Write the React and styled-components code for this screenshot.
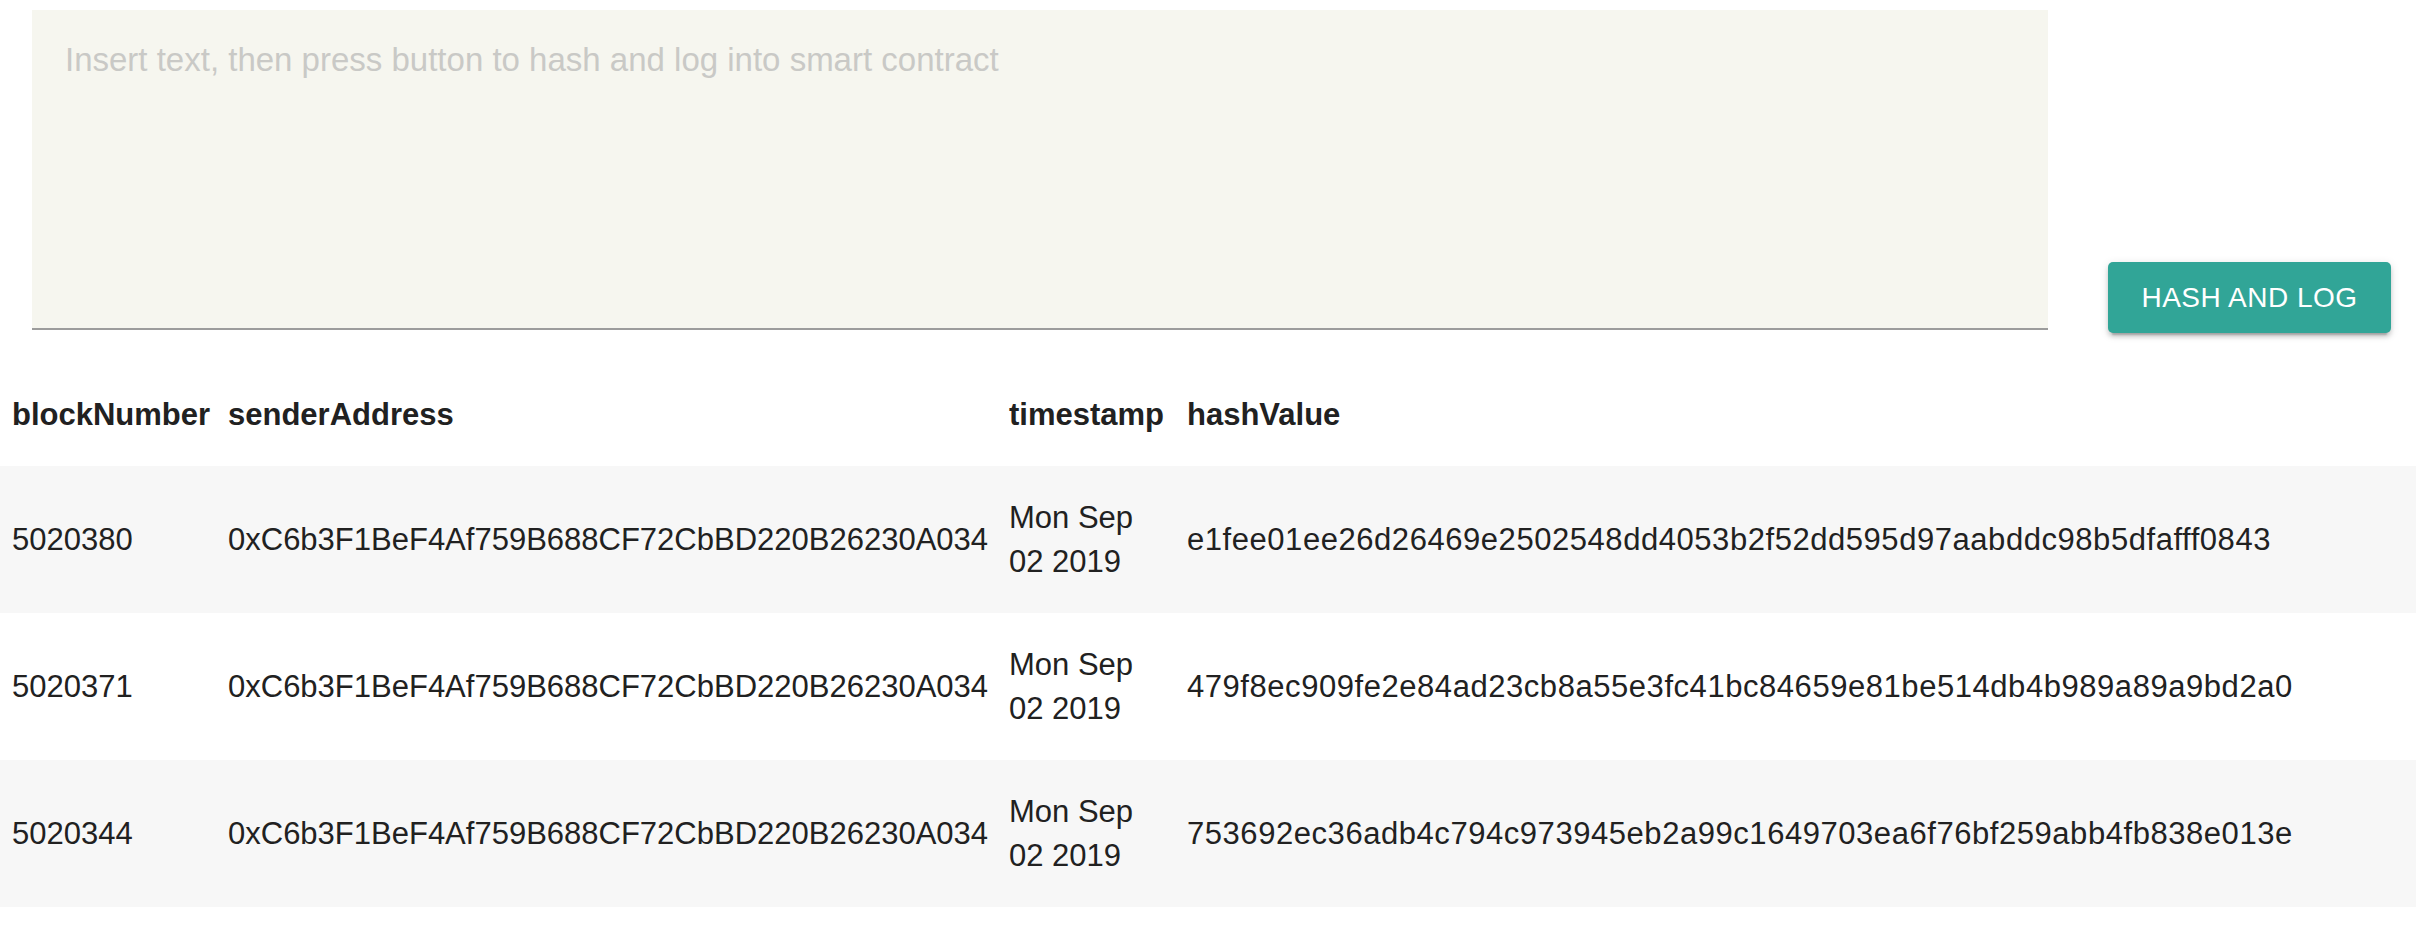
import React from 'react';
import styled, { createGlobalStyle } from 'styled-components';

const GlobalStyle = createGlobalStyle`
  body {
    margin: 0;
    background: #fff;
    font-family: "Liberation Sans", Arial, sans-serif;
    color: #212121;
  }
`;

const Page = styled.div`
  width: 100%;
`;

const Composer = styled.div`
  display: flex;
  align-items: flex-end;
  gap: 60px;
  padding: 10px 25px 0 32px;
`;

const TextBox = styled.textarea`
  flex: 1;
  height: 320px;
  box-sizing: border-box;
  margin-bottom: 3px;
  padding: 30px 33px;
  border: none;
  border-bottom: 2px solid #9c9c9c;
  background: #f6f6ef;
  resize: none;
  outline: none;
  font-family: "Liberation Sans", Arial, sans-serif;
  font-size: 33px;
  line-height: 1.2;
  color: #212121;

  &::placeholder {
    color: #c9c9c6;
  }
`;

const Button = styled.button`
  width: 283px;
  height: 71px;
  border: none;
  border-radius: 5px;
  background: #31a597;
  color: #fff;
  font-family: "Liberation Sans", Arial, sans-serif;
  font-size: 28px;
  letter-spacing: 0.5px;
  text-transform: uppercase;
  cursor: pointer;
  box-shadow: 0 6px 2px -4px rgba(0, 0, 0, 0.2), 0 4px 4px 0 rgba(0, 0, 0, 0.14),
    0 2px 10px 0 rgba(0, 0, 0, 0.12);
`;

const Table = styled.table`
  width: 100%;
  margin-top: 30px;
  border-collapse: collapse;
  table-layout: fixed;
`;

const Row = styled.tr`
  background: ${(p) => (p.$striped ? '#f7f7f7' : '#fff')};
`;

const HeadCell = styled.th`
  padding: 29.5px 8px 29.5px 12px;
  text-align: left;
  font-size: 31px;
  line-height: 44px;
  font-weight: 700;
  color: #212121;
  vertical-align: middle;
`;

const Cell = styled.td`
  padding: 29.5px 8px 29.5px 12px;
  font-size: 31px;
  line-height: 44px;
  color: #212121;
  vertical-align: middle;
  white-space: ${(p) => (p.$wrap ? 'normal' : 'nowrap')};
  letter-spacing: ${(p) => (p.$hex ? '0.55px' : 'normal')};
`;

const logs = [
  {
    block: '5020380',
    sender: '0xC6b3F1BeF4Af759B688CF72CbBD220B26230A034',
    time: 'Mon Sep 02 2019',
    hash: 'e1fee01ee26d26469e2502548dd4053b2f52dd595d97aabddc98b5dfafff0843',
  },
  {
    block: '5020371',
    sender: '0xC6b3F1BeF4Af759B688CF72CbBD220B26230A034',
    time: 'Mon Sep 02 2019',
    hash: '479f8ec909fe2e84ad23cb8a55e3fc41bc84659e81be514db4b989a89a9bd2a0',
  },
  {
    block: '5020344',
    sender: '0xC6b3F1BeF4Af759B688CF72CbBD220B26230A034',
    time: 'Mon Sep 02 2019',
    hash: '753692ec36adb4c794c973945eb2a99c1649703ea6f76bf259abb4fb838e013e',
  },
];

const App = () => {
  return (
    <Page>
      <GlobalStyle />
      <Composer>
        <TextBox placeholder="Insert text, then press button to hash and log into smart contract" />
        <Button>Hash and log</Button>
      </Composer>
      <Table>
        <colgroup>
          <col style={{ width: 216 }} />
          <col style={{ width: 781 }} />
          <col style={{ width: 178 }} />
          <col />
        </colgroup>
        <thead>
          <Row>
            <HeadCell>blockNumber</HeadCell>
            <HeadCell>senderAddress</HeadCell>
            <HeadCell>timestamp</HeadCell>
            <HeadCell>hashValue</HeadCell>
          </Row>
        </thead>
        <tbody>
          {logs.map((log, i) => (
            <Row key={log.block} $striped={i % 2 === 0}>
              <Cell>{log.block}</Cell>
              <Cell>{log.sender}</Cell>
              <Cell $wrap>{log.time}</Cell>
              <Cell $hex>{log.hash}</Cell>
            </Row>
          ))}
        </tbody>
      </Table>
    </Page>
  );
};

export default App;
